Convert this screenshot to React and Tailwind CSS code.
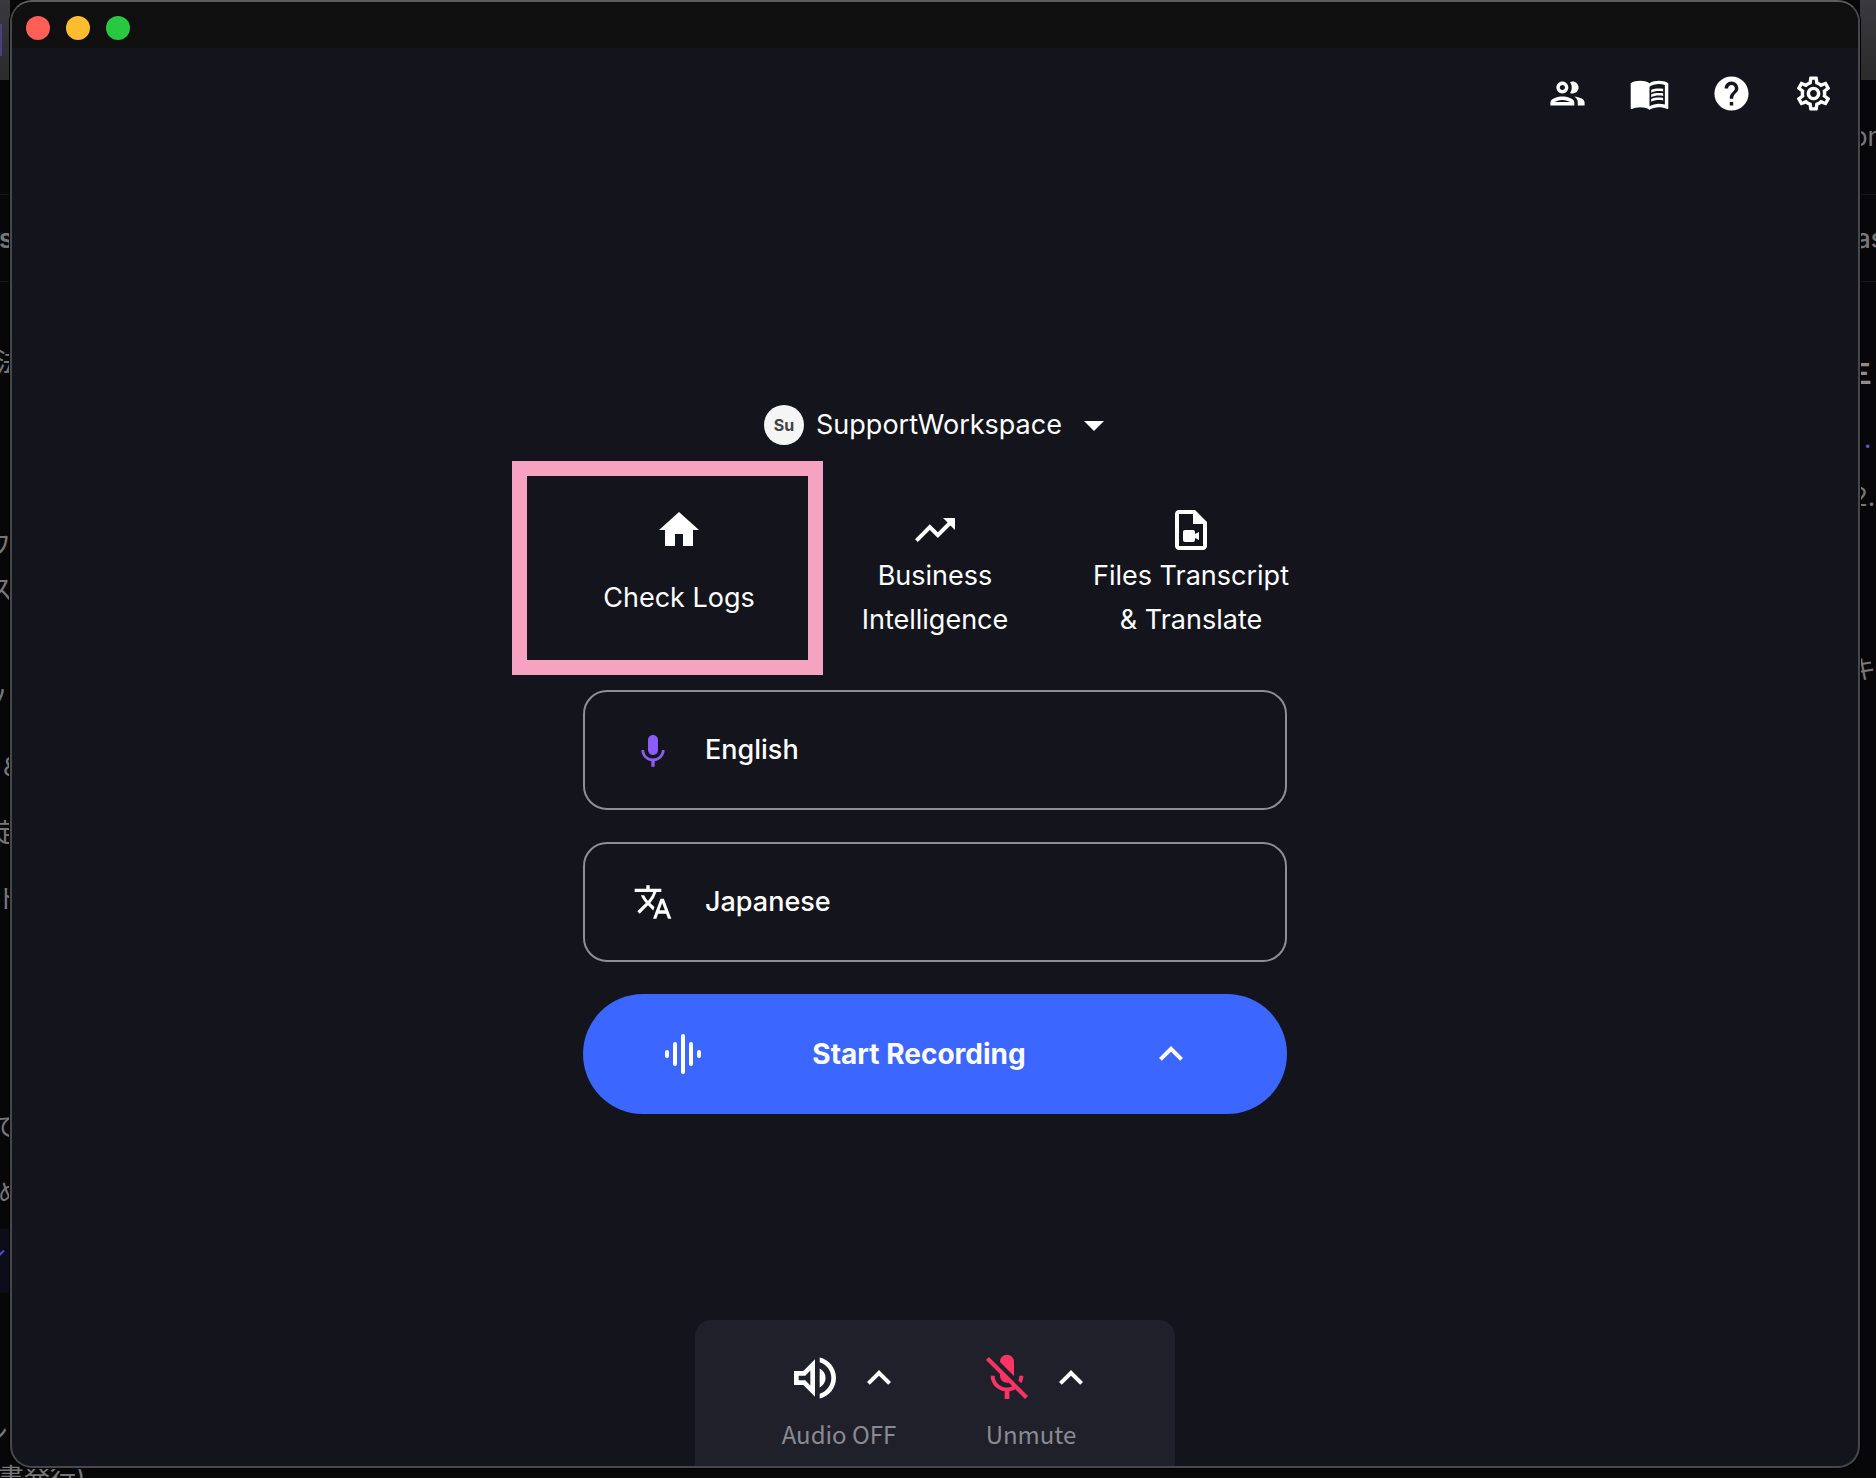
import React from "react";
import {
  MdExpandLess,
  MdArrowDropDown,
  MdHelp,
  MdHome,
  MdKeyboardVoice,
  MdMenuBook,
  MdMicOff,
  MdOutlineGroup,
  MdOutlineSettings,
  MdOutlineVideoFile,
  MdOutlineVolumeUp,
  MdTranslate,
  MdTrendingUp,
} from "react-icons/md";

const leftText = [
  { text: "s", place: "top-[219px] -left-px font-semibold" },
  { text: "法", place: "top-[343px] -left-1" },
  { text: "ワ", place: "top-[526px] -left-[15px]" },
  { text: "ス", place: "top-[570px] -left-[13px]" },
  { text: "ソ", place: "top-[679px] -left-[18px]" },
  { text: "&", place: "top-[747px] left-[3px]" },
  { text: "定", place: "top-[813px] -left-2" },
  { text: "ト", place: "top-[879px] -left-1" },
  { text: "で", place: "top-[1107px] -left-2" },
  { text: "め", place: "top-[1173px] -left-0.5" },
  { text: "ン", place: "top-[1414px] -left-[18px]" },
  { text: "書発行)", place: "top-[1458px] -left-0.5" },
];

const rightText = [
  { text: "on", place: "top-[117px] -left-2" },
  { text: "as", place: "top-[219px] -left-1 font-medium" },
  { text: "三", place: "top-[354px] -left-3.5 font-bold text-[#8e8e90]" },
  { text: ".", place: "top-[419px] left-1 text-[#5a55d8]" },
  { text: "2.", place: "top-[477px] -left-2" },
  { text: "キ", place: "top-[650px] -left-2.5" },
];

function Backdrop() {
  return (
    <div
      aria-hidden="true"
      className="absolute inset-0 flex justify-between overflow-hidden font-['Inter','Noto_Sans_CJK_JP',sans-serif] text-[26px] leading-10 whitespace-nowrap text-[#77777a]"
    >
      <div className="relative w-2.5">
        <div className="h-20 border-b-2 border-[#2c2c2d] bg-linear-to-b from-[#3a3a3e] to-[#2b2b2c]" />
        <div className="absolute top-6 left-0 h-8 w-0.5 bg-[#4a3f86]" />
        <div className="absolute top-[194px] h-px w-full bg-[#171719]" />
        <div className="absolute top-[281px] h-px w-full bg-[#171719]" />
        <div className="absolute top-[1229px] h-16 w-full bg-[#0c0c1a]" />
        <svg viewBox="0 0 10 10" className="absolute top-[1248px] left-0 size-2.5 fill-none stroke-[#4f4bc4] stroke-2">
          <path d="M-3 5 L-1 7.500 L4 2.500" />
        </svg>
        {leftText.map((item) => (
          <span key={item.text} className={`absolute ${item.place}`}>
            {item.text}
          </span>
        ))}
      </div>
      <div className="relative w-4">
        <div className="h-20 border-b-2 border-[#2c2c2d] bg-linear-to-b from-[#3a3a3e] to-[#2b2b2c]" />
        <div className="absolute top-[194px] h-px w-full bg-[#171719]" />
        <div className="absolute top-[281px] h-px w-full bg-[#171719]" />
        {rightText.map((item) => (
          <span key={item.text} className={`absolute ${item.place}`}>
            {item.text}
          </span>
        ))}
      </div>
    </div>
  );
}

const toolbar = [
  { label: "Members", Icon: MdOutlineGroup },
  { label: "Guide", Icon: MdMenuBook },
  { label: "Help", Icon: MdHelp },
  { label: "Settings", Icon: MdOutlineSettings },
];

function Waveform() {
  return (
    <svg viewBox="0 0 40 40" aria-hidden="true" className="size-10 fill-none stroke-white stroke-4" strokeLinecap="round">
      <path d="M4 18v4M12 10v20M20 2v36M28 10v20M36 18v4" />
    </svg>
  );
}

function Shortcut({ Icon, children, spaced, marked }) {
  return (
    <div className="relative flex justify-center">
      {marked && (
        <div className="pointer-events-none absolute -top-[45px] -left-[39px] h-[214px] w-[311px] border-[15px] border-[#f5a3c0]" />
      )}
      <button
        type="button"
        className={`flex flex-col items-center text-[27px] leading-11 ${spaced ? "gap-[22px]" : ""}`}
      >
        <Icon className="size-12" />
        <span>{children}</span>
      </button>
    </div>
  );
}

function LanguageField({ id, label, Icon, tone, options }) {
  return (
    <div className="relative flex h-30 items-center rounded-3xl border-2 border-[#8e8e93]">
      <label htmlFor={id} aria-label={label} className="pointer-events-none absolute left-12">
        <Icon className={`size-10 ${tone}`} />
      </label>
      <select
        id={id}
        className="size-full appearance-none rounded-3xl bg-transparent pl-30 text-[27px] font-medium text-white outline-none"
      >
        {options.map((o) => (
          <option key={o}>{o}</option>
        ))}
      </select>
    </div>
  );
}

function DeviceControl({ Icon, tone, label, menu }) {
  return (
    <div className="flex w-48 flex-col items-center">
      <div className="flex items-center">
        <button type="button" aria-label={label} className="flex w-20 justify-center">
          <Icon className={`size-14 ${tone}`} />
        </button>
        <button type="button" aria-label={menu}>
          <MdExpandLess className="size-12" />
        </button>
      </div>
      <span className="mt-2.5 font-['Noto_Sans_CJK_JP',sans-serif] text-2xl leading-9 text-[#8a8a90]">{label}</span>
    </div>
  );
}

export default function App() {
  return (
    <div className="relative flex min-h-screen flex-col bg-[#070709] pr-4 pb-2.5 pl-2.5">
      <Backdrop />
      <div className="relative flex flex-1 flex-col overflow-hidden rounded-[22px] border-2 border-[#48484a] border-t-[#5c5c5d] bg-[#14141d] font-['Inter',sans-serif] text-white shadow-[0_0_0_1px_#000]">
        <div className="flex h-[46px] items-center gap-4 bg-[#0f0f0f] pt-1.5 pl-3.5">
          <button type="button" aria-label="Close" className="size-6 rounded-full bg-[#ff5f57]" />
          <button type="button" aria-label="Minimize" className="size-6 rounded-full bg-[#febc2e]" />
          <button type="button" aria-label="Zoom" className="size-6 rounded-full bg-[#28c840]" />
        </div>

        <header className="flex justify-end gap-[41px] pt-[25px] pr-6">
          {toolbar.map(({ label, Icon }) => (
            <button key={label} type="button" aria-label={label}>
              <Icon className="size-[41px]" />
            </button>
          ))}
        </header>

        <main className="mx-auto flex flex-col items-center pt-[287px]">
          <button type="button" className="flex items-center pl-3 text-[27px] leading-11">
            <span className="mr-3 flex size-10 items-center justify-center rounded-full bg-[#f5f5f5] text-base font-bold text-[#424242]">
              Su
            </span>
            SupportWorkspace
            <MdArrowDropDown className="ml-2 size-12" />
          </button>

          <div className="mt-[57px] grid grid-cols-3 *:w-64">
            <Shortcut Icon={MdHome} spaced marked>
              Check Logs
            </Shortcut>
            <Shortcut Icon={MdTrendingUp}>
              Business
              <br />
              Intelligence
            </Shortcut>
            <Shortcut Icon={MdOutlineVideoFile}>
              Files Transcript
              <br />
              &amp; Translate
            </Shortcut>
          </div>

          <div className="mt-12 flex w-[704px] flex-col gap-8">
            <LanguageField
              id="spoken"
              label="Spoken language"
              Icon={MdKeyboardVoice}
              tone="text-[#8b5cf6]"
              options={["English", "Japanese"]}
            />
            <LanguageField
              id="translated"
              label="Translation language"
              Icon={MdTranslate}
              tone="text-white"
              options={["Japanese", "English"]}
            />
            <div className="flex h-30 items-center rounded-full bg-[#3b66ff]">
              <button type="button" className="flex h-full flex-1 items-center pl-20 text-[28px] font-bold">
                <Waveform />
                <span className="flex-1 text-center">Start Recording</span>
              </button>
              <button type="button" aria-label="Recording options" className="mr-23 ml-3">
                <MdExpandLess className="size-12" />
              </button>
            </div>
          </div>
        </main>

        <footer className="mx-auto mt-auto flex w-[480px] justify-center rounded-t-2xl bg-[#20202a] pt-[30px] pb-3.5">
          <DeviceControl Icon={MdOutlineVolumeUp} tone="text-white" label="Audio OFF" menu="Audio options" />
          <DeviceControl Icon={MdMicOff} tone="text-[#ff3366]" label="Unmute" menu="Microphone options" />
        </footer>
      </div>
    </div>
  );
}
